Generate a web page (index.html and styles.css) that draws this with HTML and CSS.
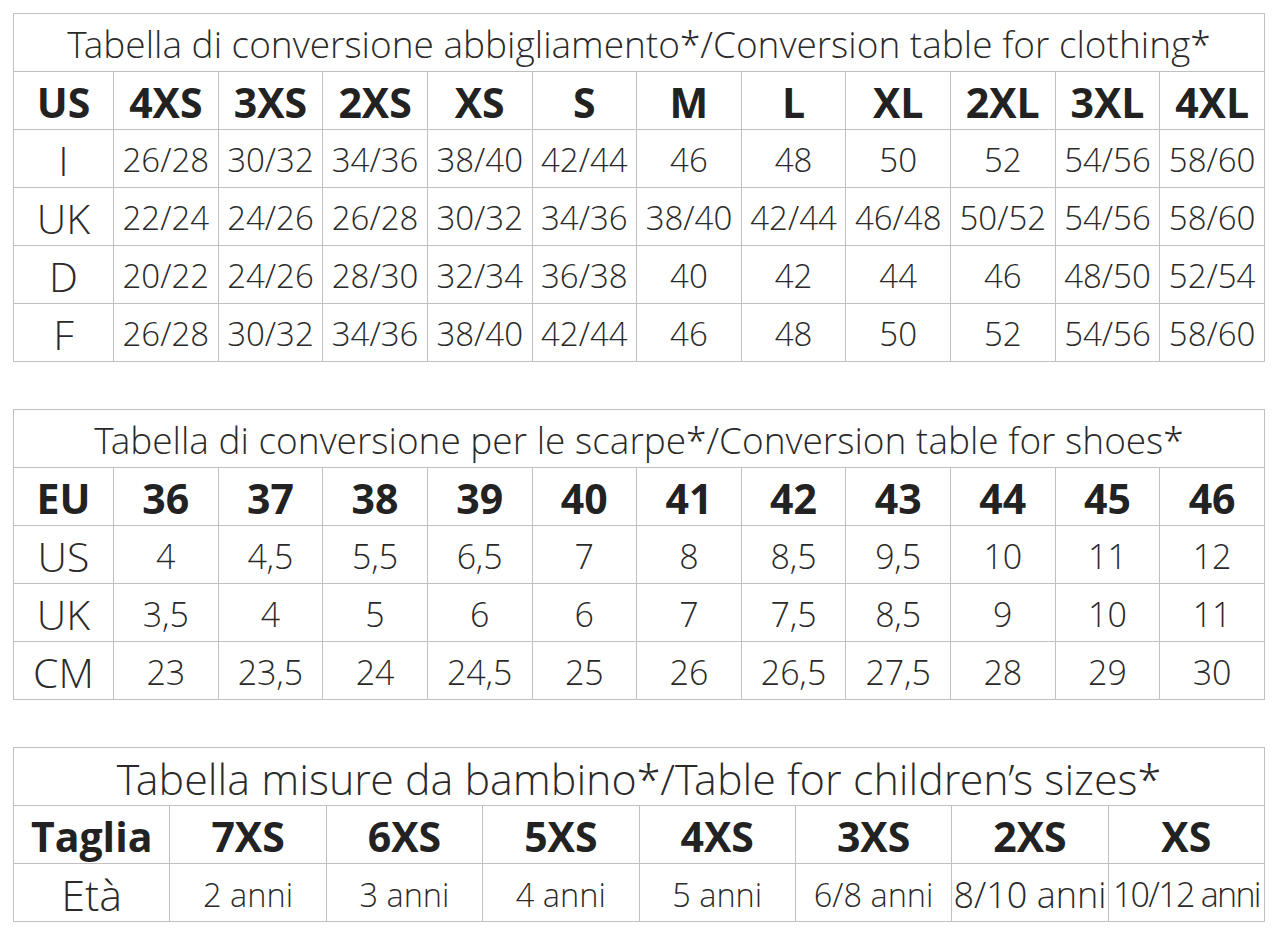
FILE: index.html
```html
<!DOCTYPE html>
<html>
<head>
<meta charset="utf-8">
<link rel="stylesheet" href="styles.css">
</head>
<body>
<div class="page">
  <table class="grid t1">
    <colgroup><col class="c-first"><col span="11"></colgroup>
    <tr><td class="title" colspan="12">Tabella di conversione abbigliamento*/Conversion table for clothing*</td></tr>
    <tr class="head"><th>US</th><th>4XS</th><th>3XS</th><th>2XS</th><th>XS</th><th>S</th><th>M</th><th>L</th><th>XL</th><th>2XL</th><th>3XL</th><th>4XL</th></tr>
    <tr><td class="lab">I</td><td>26/28</td><td>30/32</td><td>34/36</td><td>38/40</td><td>42/44</td><td>46</td><td>48</td><td>50</td><td>52</td><td>54/56</td><td>58/60</td></tr>
    <tr><td class="lab">UK</td><td>22/24</td><td>24/26</td><td>26/28</td><td>30/32</td><td>34/36</td><td>38/40</td><td>42/44</td><td>46/48</td><td>50/52</td><td>54/56</td><td>58/60</td></tr>
    <tr><td class="lab">D</td><td>20/22</td><td>24/26</td><td>28/30</td><td>32/34</td><td>36/38</td><td>40</td><td>42</td><td>44</td><td>46</td><td>48/50</td><td>52/54</td></tr>
    <tr><td class="lab">F</td><td>26/28</td><td>30/32</td><td>34/36</td><td>38/40</td><td>42/44</td><td>46</td><td>48</td><td>50</td><td>52</td><td>54/56</td><td>58/60</td></tr>
  </table>

  <table class="grid t2">
    <colgroup><col class="c-first"><col span="11"></colgroup>
    <tr><td class="title" colspan="12">Tabella di conversione per le scarpe*/Conversion table for shoes*</td></tr>
    <tr class="head"><th>EU</th><th>36</th><th>37</th><th>38</th><th>39</th><th>40</th><th>41</th><th>42</th><th>43</th><th>44</th><th>45</th><th>46</th></tr>
    <tr><td class="lab">US</td><td>4</td><td>4,5</td><td>5,5</td><td>6,5</td><td>7</td><td>8</td><td>8,5</td><td>9,5</td><td>10</td><td>11</td><td>12</td></tr>
    <tr><td class="lab">UK</td><td>3,5</td><td>4</td><td>5</td><td>6</td><td>6</td><td>7</td><td>7,5</td><td>8,5</td><td>9</td><td>10</td><td>11</td></tr>
    <tr><td class="lab">CM</td><td>23</td><td>23,5</td><td>24</td><td>24,5</td><td>25</td><td>26</td><td>26,5</td><td>27,5</td><td>28</td><td>29</td><td>30</td></tr>
  </table>

  <table class="grid t3">
    <tr><td class="title big" colspan="8">Tabella misure da bambino*/Table for children’s sizes*</td></tr>
    <tr class="head"><th>Taglia</th><th>7XS</th><th>6XS</th><th>5XS</th><th>4XS</th><th>3XS</th><th>2XS</th><th>XS</th></tr>
    <tr class="kids"><td class="lab">Età</td><td>2 anni</td><td>3 anni</td><td>4 anni</td><td>5 anni</td><td>6/8 anni</td><td class="wide">8/10 anni</td><td class="tight">10/12 anni</td></tr>
  </table>
</div>
</body>
</html>
```

FILE: styles.css
```css
html, body {
  margin: 0;
  padding: 0;
  background: #fff;
}

.page {
  padding: 13px 16px 0 13px;
  display: flex;
  flex-direction: column;
  gap: 47px;
  font-family: "Open Sans Light", "Open Sans", "DejaVu Sans", sans-serif;
  color: #222;
}

.grid {
  width: 1252px;
  border-collapse: collapse;
  table-layout: fixed;
}

.grid td, .grid th {
  border: 1px solid #c0c0c0;
  height: 53px;
  padding: 4px 0 0 0;
  line-height: 1.1;
  text-align: center;
  vertical-align: middle;
  white-space: nowrap;
  overflow: visible;
}

.c-first { width: 100px; }

.head th {
  font-family: "Open Sans", "DejaVu Sans", sans-serif;
  font-weight: 700;
  font-size: 41px;
  color: #222;
}

.grid td {
  font-weight: 300;
  font-size: 33px;
  color: #2a2a2a;
}

.t2 td { font-size: 34px; }

.grid td.lab { font-size: 41px; }

.grid td.title { font-size: 37px; }
.grid td.title.big { font-size: 43px; }

.kids td { font-size: 32.5px; }
.grid .kids td.lab { font-size: 43px; }
.kids td.wide { font-size: 36px; }
.kids td.tight { font-size: 34px; letter-spacing: -1.7px; }
```
